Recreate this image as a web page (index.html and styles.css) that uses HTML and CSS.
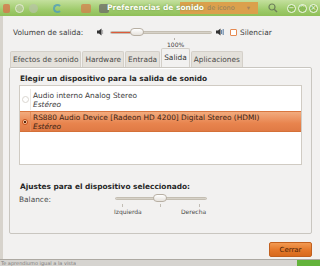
FILE: index.html
```html
<!DOCTYPE html>
<html lang="es">
<head>
    <meta charset="UTF-8">
    <title>Preferencias de sonido</title>
    <link rel="stylesheet" href="styles.css">
</head>
<body>
    <div class="screen">
        <div class="titlebar">
            <div class="tb-apps">
                <span class="app app-red"></span>
                <span class="app app-ring"></span>
                <span class="app app-x"></span>
                <span class="app app-c"></span>
                <span class="app app-home"></span>
                <span class="app app-screen"></span>
            </div>
            <div class="tb-search">de icono <span class="tb-arrow">▾</span></div>
            <svg class="tb-lens" width="10" height="10" viewBox="0 0 10 10">
                <circle cx="4" cy="4" r="3" fill="none" stroke="#6d7f5a" stroke-width="1.2"/>
                <path d="M6.2 6.2 L9 9" stroke="#6d7f5a" stroke-width="1.4"/>
            </svg>
            <div class="tb-buttons">
                <span class="wbtn">&minus;</span>
                <span class="wbtn">^</span>
                <span class="wbtn">&times;</span>
            </div>
            <div class="tb-title">Preferencias de sonido</div>
        </div>

        <div class="window">
            <div class="volume-row">
                <span class="vol-label">Volumen de salida:</span>
                <svg class="spk" width="7" height="8" viewBox="0 0 7 8">
                    <path d="M0 2.5 H2 L4.5 0.5 V7.5 L2 5.5 H0 Z" fill="#333"/>
                    <path d="M5.6 2 V6" stroke="#999" stroke-width="0.8"/>
                </svg>
                <div class="vol-slider">
                    <div class="track"><div class="fill"></div></div>
                    <span class="thumb"></span>
                    <span class="vol-tick"></span>
                    <span class="vol-pct">100%</span>
                </div>
                <svg class="spk" width="9" height="8" viewBox="0 0 9 8">
                    <path d="M0 2.5 H2 L4.5 0.5 V7.5 L2 5.5 H0 Z" fill="#333"/>
                    <path d="M5.6 2 V6 M7.2 1 V7" stroke="#4a6f9a" stroke-width="0.9"/>
                </svg>
                <span class="check"></span>
                <span class="check-label">Silenciar</span>
            </div>

            <div class="tabs">
                <span class="tab">Efectos de sonido</span>
                <span class="tab">Hardware</span>
                <span class="tab">Entrada</span>
                <span class="tab active">Salida</span>
                <span class="tab">Aplicaciones</span>
            </div>

            <div class="panel">
                <h2 class="section">Elegir un dispositivo para la salida de sonido</h2>
                <div class="device-list">
                    <div class="device">
                        <span class="radio"></span>
                        <div class="device-text">
                            <span class="device-name">Audio interno Analog Stereo</span>
                            <span class="device-profile">Estéreo</span>
                        </div>
                    </div>
                    <div class="device selected">
                        <span class="radio on"></span>
                        <div class="device-text">
                            <span class="device-name">RS880 Audio Device [Radeon HD 4200] Digital Stereo (HDMI)</span>
                            <span class="device-profile">Estéreo</span>
                        </div>
                    </div>
                </div>

                <h2 class="section settings">Ajustes para el dispositivo seleccionado:</h2>
                <div class="balance-row">
                    <span class="bal-label">Balance:</span>
                    <div class="bal-slider">
                        <div class="track"></div>
                        <span class="thumb"></span>
                        <span class="tick t-left"></span>
                        <span class="tick t-mid"></span>
                        <span class="tick t-right"></span>
                        <span class="bal-mark m-left">Izquierda</span>
                        <span class="bal-mark m-right">Derecha</span>
                    </div>
                </div>
            </div>

            <div class="actions">
                <button class="btn-close">Cerrar</button>
            </div>
        </div>

        <div class="behind">
            <span class="behind-text">Te aprendiumo igual a la vista</span>
            <span class="behind-green"></span>
        </div>
    </div>
</body>
</html>
```

FILE: styles.css
```css
:root {
    --fontFamily: "DejaVu Sans", Verdana, sans-serif;
    --colorWindow: #f2f1f0;
    --colorBorder: #c9c6c0;
    --colorText: #3c3c3c;
    --colorOrange: #e9814a;
}

* {
    box-sizing: border-box;
}

body {
    margin: 0;
    font-family: var(--fontFamily);
    font-size: 7.4px;
    color: var(--colorText);
    background: #dcdad5;
}

.screen {
    width: 320px;
    height: 266px;
    overflow: hidden;
    display: flex;
    flex-direction: column;
    background: var(--colorWindow);
}

/* title bar, with the panel blurred behind it */
.titlebar {
    position: relative;
    height: 16px;
    display: flex;
    align-items: center;
    padding-left: 3px;
    background: linear-gradient(#c4e09e, #9fcb6c 60%, #8fbf58);
}

.tb-apps {
    display: flex;
    align-items: center;
    gap: 5px;
    opacity: 0.75;
}

.app {
    display: block;
    width: 9px;
    height: 9px;
    border-radius: 2px;
}

.app-red { background: #d9724a; width: 7px; }
.app-ring { border: 1.5px solid #f4f4ec; border-radius: 50%; background: #b8c99c; }
.app-x { background: #b7c4a5; border-radius: 50%; margin-right: 10px; }
.app-c { border: 2.5px solid #4a9bbf; border-right-color: transparent; border-radius: 50%; margin-right: 14px; }
.app-home { background: #d4804c; width: 10px; margin-right: 3px; }
.app-screen { background: #6d6b68; width: 10px; }

.tb-search {
    margin-left: 71px;
    width: 78px;
    height: 12px;
    padding-left: 27px;
    background: #dba04c;
    color: #8f8060;
    font-size: 6.5px;
    line-height: 12px;
    white-space: nowrap;
}

.tb-arrow {
    margin-left: 10px;
    color: #a8855a;
}

.tb-lens {
    margin-left: 10px;
}

.tb-buttons {
    margin-left: auto;
    margin-right: 2px;
    display: flex;
    gap: 2px;
}

.wbtn {
    width: 9px;
    height: 9px;
    border: 1px solid #f6fbef;
    border-radius: 50%;
    color: #f6fbef;
    font-size: 7px;
    line-height: 7px;
    text-align: center;
    background: #8bbb57;
}

.tb-title {
    position: absolute;
    left: 107px;
    top: 3px;
    color: #fdfdf8;
    font-weight: bold;
    font-size: 7.5px;
    text-shadow: 0 0 2px #6d9240;
}

/* window */
.window {
    flex: 1;
    display: flex;
    flex-direction: column;
    border-left: 3px solid #d7d3cc;
    padding: 0 8px 0 6px;
}

.volume-row {
    display: flex;
    align-items: center;
    height: 30px;
    padding: 5px 0 3px 4px;
}

.vol-label {
    width: 84px;
    white-space: nowrap;
}

.vol-slider {
    position: relative;
    width: 102px;
    height: 8px;
    margin: 0 4px 0 6px;
}

.track {
    margin-top: 3px;
    height: 3px;
    border-radius: 2px;
    background: #d7d2c8;
    border: 0.5px solid #c4beb2;
}

.fill {
    width: 22px;
    height: 100%;
    border-radius: 2px;
    background: #de5a3a;
}

.thumb {
    position: absolute;
    top: 0;
    left: 20px;
    width: 14px;
    height: 8px;
    border-radius: 4px;
    border: 1px solid #b8b0a4;
    background: linear-gradient(#ffffff, #e6e2dc);
}

.vol-tick {
    position: absolute;
    left: 64px;
    top: 10px;
    width: 1px;
    height: 2px;
    background: #b5b0a8;
}

.vol-pct {
    position: absolute;
    left: 57px;
    top: 13px;
    font-size: 6px;
}

.check {
    width: 7px;
    height: 7px;
    margin-left: 5px;
    border: 1px solid #e58a52;
    border-radius: 1px;
    background: #fff;
}

.check-label {
    margin-left: 3px;
}

/* tabs */
.tabs {
    display: flex;
    align-items: flex-end;
    height: 21px;
    padding-left: 1px;
}

.tab {
    height: 16px;
    line-height: 15px;
    padding: 0 2px;
    margin-right: 1px;
    background: #e4e1db;
    border: 1px solid #d4d0c9;
    border-bottom: none;
    border-radius: 2px 2px 0 0;
    color: #4a4a48;
    white-space: nowrap;
}

.tab.active {
    height: 19px;
    line-height: 18px;
    background: var(--colorWindow);
    color: #333;
}

.panel {
    height: 167px;
    border: 1px solid var(--colorBorder);
    border-radius: 2px;
    box-shadow: 0 1px 0 #fff inset;
    padding: 6px 9px 0 9px;
}

.section {
    margin: 0 0 2px 1px;
    font-size: 7.4px;
    font-weight: bold;
    color: #262626;
    height: 9px;
    white-space: nowrap;
}

.device-list {
    height: 80px;
    background: #fff;
    border: 1px solid #d0cbc3;
    padding-top: 3px;
}

.device {
    display: flex;
    height: 21px;
    align-items: center;
    margin-bottom: 1px;
}

.device.selected {
    background: linear-gradient(#f2ab7e, #e8844e 60%, #e07a45);
    border-top: 1px solid #d9763f;
    border-bottom: 1px solid #d47038;
}

.radio {
    width: 11px;
    align-self: stretch;
    border-right: 1px solid #ece9e4;
    display: flex;
    align-items: center;
    justify-content: center;
    margin-right: 2px;
}

.radio::after {
    content: '';
    width: 5px;
    height: 5px;
    border-radius: 50%;
    border: 1px solid #dad6d0;
}

.radio.on {
    border-right-color: #e08e5d;
}

.radio.on::after {
    width: 4px;
    height: 4px;
    border: 1px solid #c6531e;
    background: radial-gradient(#5a2a10 40%, #f7c8a5 50%);
}

.device-text {
    display: flex;
    flex-direction: column;
    line-height: 9px;
    white-space: nowrap;
}

.device-profile {
    font-style: italic;
}

.selected .device-text {
    color: #3a2416;
}

.section.settings {
    margin-top: 17px;
    margin-bottom: 4px;
}

.balance-row {
    display: flex;
    height: 30px;
}

.bal-label {
    width: 96px;
    color: #4b4b4b;
}

.bal-slider {
    position: relative;
    width: 92px;
    height: 8px;
}

.bal-slider .track {
    margin-top: 2px;
}

.bal-slider .thumb {
    left: 38px;
    top: -1px;
}

.tick {
    position: absolute;
    top: 9px;
    width: 1px;
    height: 3px;
    background: #c2bdb4;
}

.t-left { left: 7px; }
.t-mid { left: 45px; }
.t-right { left: 84px; }

.bal-mark {
    position: absolute;
    top: 13px;
    font-size: 6px;
    color: #4b4b4b;
}

.m-left { left: -1px; }
.m-right { left: 66px; }

.actions {
    display: flex;
    justify-content: flex-end;
    padding-top: 8px;
}

.btn-close {
    width: 43px;
    height: 15px;
    padding: 0;
    border: 1px solid #c2601e;
    border-radius: 2px;
    background: linear-gradient(#f29a52, #e47729 55%, #d86a1d);
    color: #4a2408;
    font-family: var(--fontFamily);
    font-size: 7px;
}

/* desktop showing under the window */
.behind {
    display: flex;
    height: 7px;
    background: #d6d4d0;
    border-top: 1px solid #ada9a2;
}

.behind-text {
    padding-left: 1px;
    font-size: 5px;
    line-height: 6px;
    color: #5a5a5a;
    white-space: nowrap;
    opacity: 0.7;
}

.behind-green {
    margin-left: auto;
    width: 23px;
    background: #63b33b;
}
```
